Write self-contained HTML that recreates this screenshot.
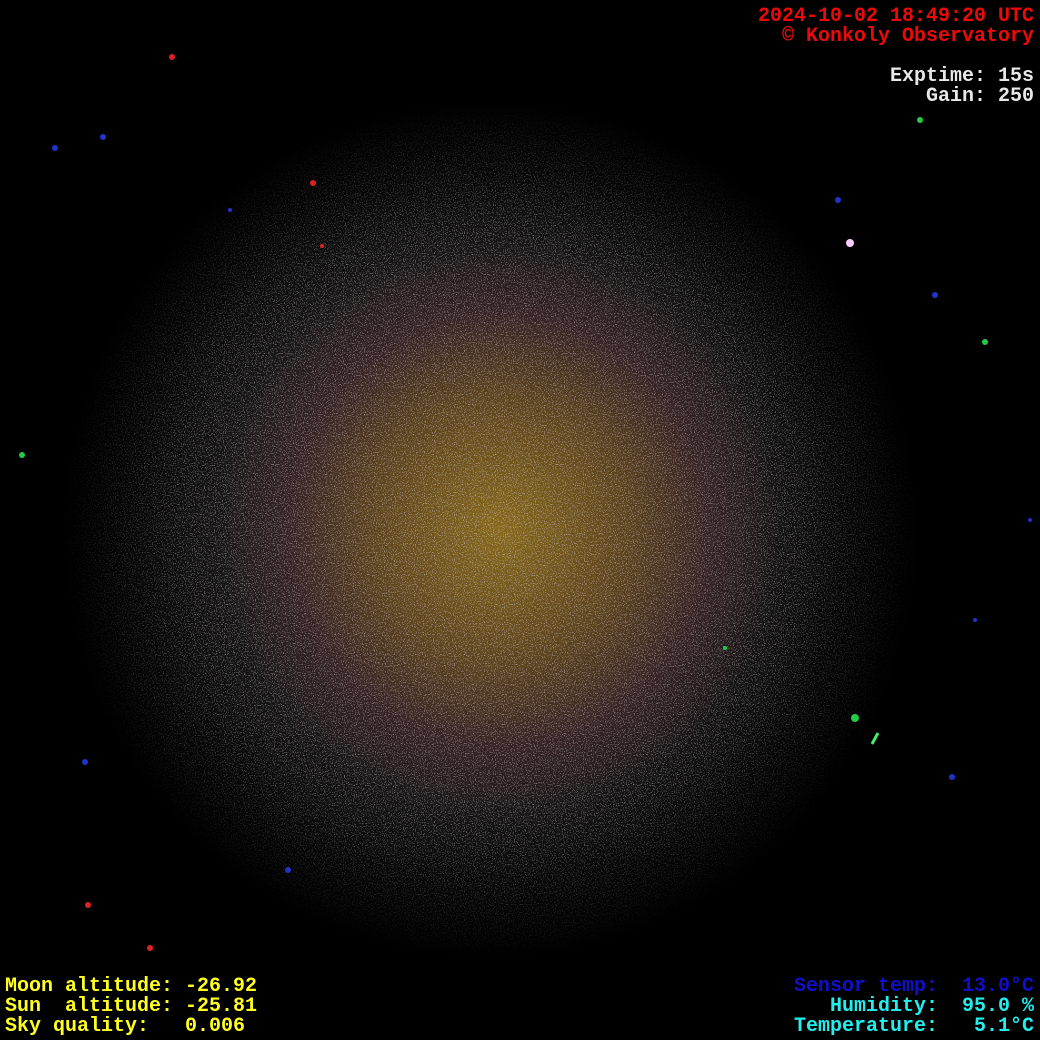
<!DOCTYPE html>
<html><head><meta charset="utf-8"><style>
html,body{margin:0;padding:0;background:#000;}
#c{position:relative;width:1040px;height:1040px;overflow:hidden;background:#000;}
.glow{position:absolute;inset:0;background:
radial-gradient(ellipse 280px 290px at 500px 530px, rgba(165,125,20,0.75) 0%, rgba(140,95,25,0.55) 45%, rgba(110,50,55,0.3) 75%, rgba(80,70,75,0) 100%),
radial-gradient(ellipse 420px 430px at 490px 530px, rgba(80,75,78,0.55) 0%, rgba(65,62,65,0.4) 60%, rgba(35,35,35,0.18) 85%, rgba(0,0,0,0) 100%);}
.t{position:absolute;font:bold 20px/20px "Liberation Mono",monospace;white-space:pre;margin:0;}
.r{right:6px;text-align:right;}
</style></head><body><div id="c">
<div class="glow"></div>
<svg width="1040" height="1040" style="position:absolute;left:0;top:0">
<defs>
<filter id="n" x="0" y="0" width="100%" height="100%">
<feTurbulence type="fractalNoise" baseFrequency="0.9" numOctaves="1" seed="3"/>
<feColorMatrix type="matrix" values="0 0 0 0 0.55  0 0 0 0 0.5  0 0 0 0 0.5  0 0 0 9 -5"/>
</filter>
<radialGradient id="m" cx="490" cy="530" r="430" gradientUnits="userSpaceOnUse">
<stop offset="0" stop-color="#fff" stop-opacity="0.7"/>
<stop offset="0.7" stop-color="#fff" stop-opacity="0.5"/>
<stop offset="1" stop-color="#fff" stop-opacity="0"/>
</radialGradient>
<mask id="mk"><rect width="1040" height="1040" fill="url(#m)"/></mask>
</defs>
<rect width="1040" height="1040" filter="url(#n)" mask="url(#mk)"/>
<g fill="#23c">
<circle cx="55" cy="148" r="3"/><circle cx="103" cy="137" r="3"/><circle cx="935" cy="295" r="3"/><circle cx="838" cy="200" r="3"/><circle cx="288" cy="870" r="3"/><circle cx="952" cy="777" r="3"/><circle cx="85" cy="762" r="3"/><circle cx="230" cy="210" r="2"/><circle cx="1030" cy="520" r="2"/><circle cx="975" cy="620" r="2"/>
</g>
<g fill="#2c4">
<circle cx="855" cy="718" r="4"/><circle cx="22" cy="455" r="3"/><circle cx="985" cy="342" r="3"/><circle cx="920" cy="120" r="3"/><circle cx="725" cy="648" r="2"/>
</g>
<g fill="#d22">
<circle cx="313" cy="183" r="3"/><circle cx="172" cy="57" r="3"/><circle cx="88" cy="905" r="3"/><circle cx="150" cy="948" r="3"/><circle cx="322" cy="246" r="2"/>
</g>
<circle cx="850" cy="243" r="4" fill="#fcf"/>
<line x1="872" y1="744" x2="878" y2="733" stroke="#4e6" stroke-width="3"/>
</svg>
<pre class="t r" style="top:7px;color:#f00808">2024-10-02 18:49:20 UTC
© Konkoly Observatory</pre>
<pre class="t r" style="top:67px;color:#e8e8e8">Exptime: 15s
Gain: 250</pre>
<pre class="t" style="left:5px;top:977px;color:#ffff22">Moon altitude: -26.92
Sun  altitude: -25.81
Sky quality:   0.006</pre>
<pre class="t r" style="top:977px;color:#22eeee"><span style="color:#1010cc">Sensor temp:  13.0°C</span>
Humidity:  95.0 %
Temperature:   5.1°C</pre>
</div></body></html>
